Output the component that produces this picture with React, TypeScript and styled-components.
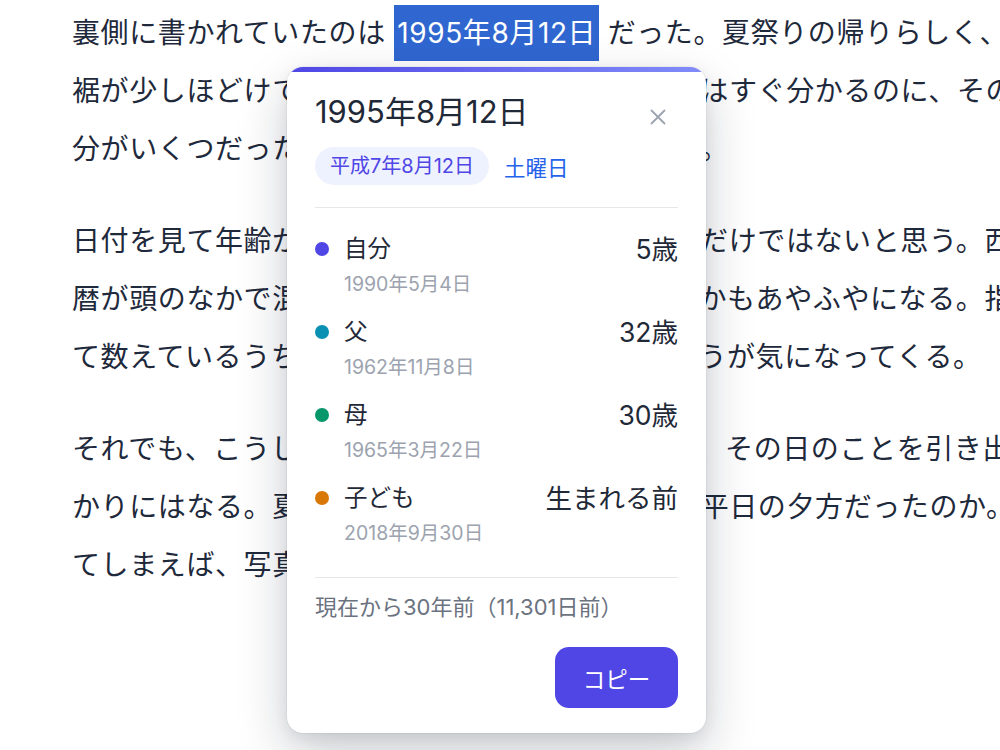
import React from "react";
import styled, { createGlobalStyle } from "styled-components";

type Member = {
  name: string;
  birth: string;
  age: string;
  color: string;
};

const members: Member[] = [
  { name: "自分", birth: "1990年5月4日", age: "5歳", color: "#4f46e5" },
  { name: "父", birth: "1962年11月8日", age: "32歳", color: "#0891b2" },
  { name: "母", birth: "1965年3月22日", age: "30歳", color: "#059669" },
  { name: "子ども", birth: "2018年9月30日", age: "生まれる前", color: "#d97706" },
];

const App: React.FC = () => {
  return (
    <Page>
      <GlobalStyle />
      <Article>
        <Paragraph>
          裏側に書かれていたのは <Selected>1995年8月12日</Selected>{" "}
          だった。夏祭りの帰りらしく、浴衣の裾が少しほどけているのまで見える。季節と場所はすぐ分かるのに、その時の自分がいくつだったのかは、すぐには思い出せない。
        </Paragraph>
        <Paragraph>
          日付を見て年齢がすぐ出てこないのは、きっと私だけではないと思う。西暦と和暦が頭のなかで混ざって、平成では何年だったのかもあやふやになる。指を折って数えているうちに、計算よりも写真の空気のほうが気になってくる。
        </Paragraph>
        <Paragraph>
          それでも、こうしてみんなの年齢を並べてみると、その日のことを引き出す手がかりにはなる。夏休みの最中だったのか、ただの平日の夕方だったのか。分かってしまえば、写真の見え方が少し変わってくる。
        </Paragraph>
      </Article>

      <Card role="dialog">
        <AccentBar />
        <CardBody>
          <Header>
            <Title>1995年8月12日</Title>
            <CloseButton aria-label="閉じる">
              <svg width="16" height="16" viewBox="0 0 16 16" fill="none">
                <path
                  d="M1.5 1.5L14.5 14.5M14.5 1.5L1.5 14.5"
                  stroke="#9ca3af"
                  strokeWidth="1.8"
                  strokeLinecap="round"
                />
              </svg>
            </CloseButton>
          </Header>
          <Meta>
            <Era>平成7年8月12日</Era>
            <Weekday>土曜日</Weekday>
          </Meta>
          <Divider $space={22} />
          <List>
            {members.map((m) => (
              <Row key={m.name}>
                <Dot $color={m.color} />
                <Name>{m.name}</Name>
                <Age>{m.age}</Age>
                <Birth>{m.birth}</Birth>
              </Row>
            ))}
          </List>
          <Divider $space={32} />
          <Summary>現在から30年前（11,301日前）</Summary>
          <Actions>
            <CopyButton>コピー</CopyButton>
          </Actions>
        </CardBody>
      </Card>
    </Page>
  );
};

const GlobalStyle = createGlobalStyle`
  html, body {
    margin: 0;
    padding: 0;
    background: #ffffff;
    overflow: hidden;
  }
  body {
    font-family: Inter, "Noto Sans CJK JP", sans-serif;
    color: #1e293b;
  }
`;

const Page = styled.main`
  position: relative;
  width: 1000px;
  height: 750px;
  overflow: hidden;
`;

const Article = styled.article`
  padding: 4px 0 0 72px;
`;

const Paragraph = styled.p`
  width: 1038px;
  margin: 0 0 34px;
  font-size: 28px;
  line-height: 58px;
  letter-spacing: 0.6px;
`;

const Selected = styled.mark`
  display: inline-block;
  padding: 0 3px;
  line-height: 56px;
  background: #3066d0;
  color: #ffffff;
`;

const Card = styled.section`
  position: absolute;
  left: 287px;
  top: 67px;
  width: 419px;
  background: #ffffff;
  border-radius: 16px;
  overflow: hidden;
  letter-spacing: normal;
  box-shadow: 0 20px 50px rgba(15, 23, 42, 0.22), 0 4px 14px rgba(15, 23, 42, 0.07),
    0 0 0 1px rgba(15, 23, 42, 0.04);
`;

const AccentBar = styled.div`
  height: 5px;
  background: linear-gradient(90deg, #4f46e5, #818cf8);
`;

const CardBody = styled.div`
  padding: 20px 28px 25px;
`;

const Header = styled.header`
  display: flex;
  justify-content: space-between;
  align-items: flex-start;
`;

const Title = styled.h2`
  margin: 0;
  font-size: 31px;
  font-weight: 400;
  line-height: 39px;
  color: #1f2937;
`;

const CloseButton = styled.button`
  display: flex;
  align-items: center;
  justify-content: center;
  width: 42px;
  height: 42px;
  margin: 4px -1px -7px 0;
  padding: 0;
  border: none;
  background: transparent;
  cursor: pointer;
`;

const Meta = styled.div`
  display: flex;
  align-items: center;
  gap: 15px;
  margin-top: 16px;
`;

const Era = styled.span`
  height: 38px;
  padding: 0 15px;
  border-radius: 19px;
  background: #eef2ff;
  color: #4f46e5;
  font-size: 20px;
  line-height: 38px;
`;

const Weekday = styled.span`
  font-size: 21.5px;
  color: #2563eb;
`;

const Divider = styled.hr<{ $space: number }>`
  height: 1px;
  margin: ${(p) => p.$space}px 0 0;
  border: none;
  background: #e5e7eb;
`;

const List = styled.ul`
  display: flex;
  flex-direction: column;
  gap: 21px;
  margin: 26px 0 0;
  padding: 0;
  list-style: none;
`;

const Row = styled.li`
  display: grid;
  grid-template-columns: 14px 1fr auto;
  column-gap: 15px;
  row-gap: 8px;
  align-items: center;
`;

const Dot = styled.span<{ $color: string }>`
  width: 14px;
  height: 14px;
  border-radius: 50%;
  background: ${(p) => p.$color};
`;

const Name = styled.span`
  font-size: 23.5px;
  line-height: 30px;
  color: #1f2937;
`;

const Age = styled.span`
  font-size: 26.5px;
  line-height: 30px;
  color: #1f2937;
  text-align: right;
`;

const Birth = styled.span`
  grid-column: 2 / 4;
  font-size: 19.5px;
  line-height: 24px;
  color: #9ca3af;
`;

const Summary = styled.p`
  margin: 15px 0 0;
  font-size: 22px;
  line-height: 28px;
  color: #6b7280;
`;

const Actions = styled.div`
  display: flex;
  justify-content: flex-end;
  margin-top: 26px;
`;

const CopyButton = styled.button`
  width: 123px;
  height: 61px;
  border: none;
  border-radius: 14px;
  background: #4f46e5;
  color: #ffffff;
  font-family: inherit;
  font-size: 22.5px;
  cursor: pointer;
`;

export default App;
